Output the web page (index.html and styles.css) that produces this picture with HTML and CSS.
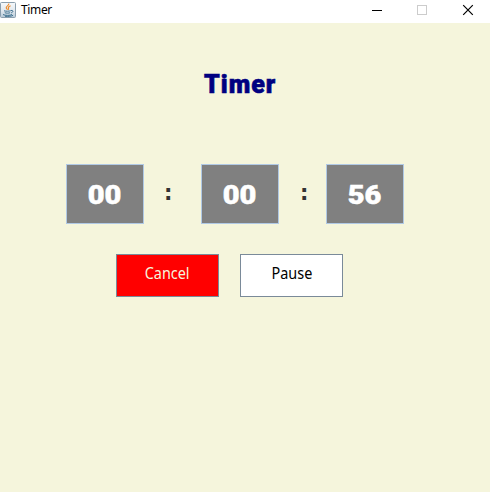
FILE: index.html
```html
<!DOCTYPE html>
<html lang="en">
<head>
<meta charset="utf-8">
<title>Timer</title>
<link rel="stylesheet" href="styles.css">
</head>
<body>
<header class="titlebar">
  <svg class="logo" width="16" height="16" viewBox="0 0 16 16" fill="none">
    <defs><linearGradient id="tile" x2="0" y2="1"><stop stop-color="#f7f9fb"/><stop offset=".55" stop-color="#e2e9ef"/><stop offset="1" stop-color="#b5c8d7"/></linearGradient></defs>
    <rect x=".5" y=".5" width="15" height="15" rx="1" fill="url(#tile)" stroke="#8b9fae"/>
    <path d="M8.7 1.5C9.6 3.5 5.4 4.2 6.3 6c.3.7 1 1.1 1.1 1.7M10.6 3.8C8.7 4.7 8 5.3 8.5 6.3c.3.6.2 1-.5 1.5" stroke="#ed8b2d" stroke-width="1.2"/>
    <path d="M4 8.8c2 .6 5 .5 6.8-.1M4.8 10.7c1.5.6 4 .6 5.3 0M3 12.5c2 1.2 7.2 1.2 9 0M11 8.5c2.6-.6 2.5 1.7.2 2.3M5 14.3c3 .3 6.7 0 8-1" stroke="#3f718f"/>
  </svg>
  <span class="caption">Timer</span>
  <div class="controls">
    <svg width="46" height="23" shape-rendering="crispEdges"><path d="M18 10.5h10" stroke="#000"/></svg>
    <svg width="45" height="23" shape-rendering="crispEdges"><path d="M17.5 5.5h9v9h-9z" fill="none" stroke="#ccc"/></svg>
    <svg width="45" height="23"><path d="M18.2 5.2l9.6 9.6m0-9.6l-9.6 9.6" stroke="#000" stroke-width="1.2"/></svg>
  </div>
</header>
<main>
  <h1><span class="heading">Timer</span></h1>
  <div class="clock">
    <div class="unit"><span class="digits">00</span></div>
    <div class="colon">:</div>
    <div class="unit"><span class="digits">00</span></div>
    <div class="colon last">:</div>
    <div class="unit"><span class="digits">56</span></div>
  </div>
  <div class="actions">
    <button class="cancel"><span>Cancel</span></button>
    <button class="pause"><span>Pause</span></button>
  </div>
</main>
</body>
</html>
```
FILE: styles.css
```css
* { box-sizing: border-box; }
body { margin: 0; height: 492px; overflow: hidden; background: #f5f5dc; font-family: "Noto Sans", sans-serif; }
.titlebar { display: flex; height: 23px; background: #fff; }
.logo { margin-top: 2px; }
.caption { margin-left: 5px; font-size: 12px; line-height: 20px; letter-spacing: -0.35px; color: #000; }
.controls { display: flex; margin-left: auto; }
h1 { display: flex; margin: 0; padding: 44px 0 0 204px; height: 141px; font-size: 25px; line-height: 36px; color: #000080; }
.heading { font-family: Roboto, sans-serif; font-weight: 900; letter-spacing: 1px; -webkit-text-stroke: .6px #000080; }
.clock { display: flex; padding-left: 66px; }
.unit { display: flex; justify-content: center; width: 78px; height: 60px; background: #808080; border: 1px solid #b0c9e5; color: #fff; }
.digits { font: 900 25px/61px Roboto, sans-serif; margin-right: 2px; transform: scaleX(1.16); -webkit-text-stroke: .5px #fff; }
.colon { width: 57px; padding-left: 20px; font: 700 21px/59px "DejaVu Sans", sans-serif; color: #333; }
.colon.last { width: 47px; padding-left: 21px; }
.actions { display: flex; gap: 21px; padding: 30px 0 0 116px; }
.actions button { width: 103px; height: 43px; padding: 0 0 5px; border: 1px solid #7a8a99; font: 15.5px/20px "Noto Sans", sans-serif; }
.cancel { background: #f00; color: #f5f5dc; }
.pause { background: #fff; color: #000; }
.actions span { display: inline-block; transform: scaleX(.93); }
```
